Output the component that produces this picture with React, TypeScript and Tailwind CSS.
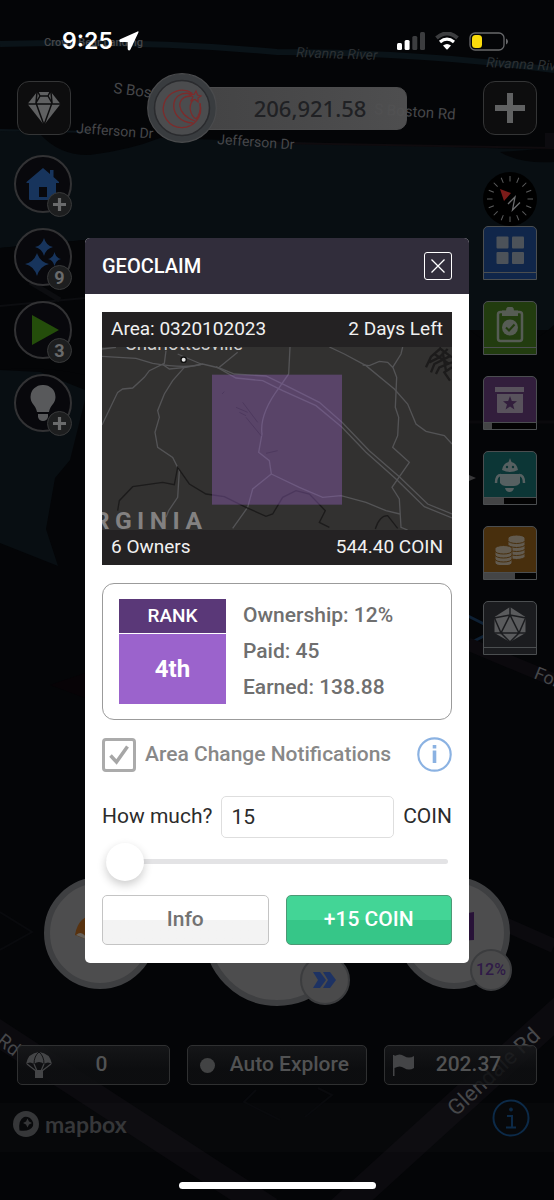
import React, { useState } from "react";

const HUD_FONT = "font-['Roboto','Open_Sans',sans-serif]";

function BackgroundMap() {
  return (
    <svg
      className="absolute inset-0 h-full w-full"
      viewBox="0 0 554 1200"
      preserveAspectRatio="xMidYMid slice"
      aria-hidden="true"
    >
      <rect width="554" height="1200" fill="#040507" />
      <path d="M0 129 L40 134 Q60 156 90 155 Q130 150 160 138 L554 150 V410 Q540 330 554 330 V330 L470 330 V400 H85 L70 460 L55 478 L46 529 L58 566 L0 543 V370 L40 372 L85 390 V240 L0 248 Z" fill="#080e12" />
      <path d="M500 152 Q520 164 554 162 V148 Z" fill="#040507" />
      <path d="M0 248 L85 240 V375 Q40 365 0 370 Z" fill="#040507" />
      <path d="M470 330 Q510 365 554 325 V470 H470 Z" fill="#040507" />
      <path d="M0 44 Q150 40 277 52 Q420 52 554 70" fill="none" stroke="#0a1318" strokeWidth="6" />
      <path d="M0 306 L85 298" stroke="#0c0d10" strokeWidth="2" />
      <path d="M30 282 L60 300" stroke="#0c0d10" strokeWidth="5" />
      <path d="M277 143 L554 148" stroke="#0f0b0e" strokeWidth="2" />
      <path d="M0 130 L90 132" stroke="#0b1318" strokeWidth="2" />
      <rect x="545" y="133" width="9" height="15" fill="#0c0b0f" />
      <path d="M469 422 H554" stroke="#0a090c" strokeWidth="3" />
      <path d="M50 685 L85 673 V698 Z" fill="#070306" />
      <path d="M468 616 L490 627 M468 644 L490 633" stroke="#0e2033" strokeWidth="3" />
      <path d="M468 644 L554 680" stroke="#0b090d" strokeWidth="13" />
      <path d="M469 475 L476 478 L469 481 Z" fill="#38383a" />
      <path d="M-10 1028 L270 1210" stroke="#0b0a0e" strokeWidth="26" />
      <path d="M572 1000 L330 1220" stroke="#0b0a0e" strokeWidth="28" />
      <path d="M500 922 L554 946" stroke="#0b0a0e" strokeWidth="14" />
      <rect y="1103" width="554" height="49" fill="#ffffff" fillOpacity="0.015" />
      <path d="M0 912 L32 932 L0 950 M256 1090 L244 1102 L280 1120 M318 1088 L332 1095 L305 1117" fill="none" stroke="#090a0d" strokeWidth="2" />
      <g fill="#46474a" className="font-['Roboto',sans-serif]">
        <text x="44" y="46" fontSize="11" className="font-medium">Crown Bear Landing</text>
        <text x="296" y="57" fontSize="14" fontStyle="italic" fill="#2b3033" transform="rotate(2 296 57)">Rivanna River</text>
        <text x="486" y="67" fontSize="14" fontStyle="italic" fill="#2b3033" transform="rotate(3 486 67)">Rivanna River</text>
        <text x="113" y="93" fontSize="15" transform="rotate(7 113 93)">S Boston Rd</text>
        <text x="76" y="133" fontSize="14" transform="rotate(4 76 133)">Jefferson Dr</text>
        <text x="217" y="144" fontSize="14" transform="rotate(4 217 144)">Jefferson Dr</text>
        <text x="374" y="114" fontSize="15" transform="rotate(4 374 114)">S Boston Rd</text>
        <text x="533" y="678" fontSize="18" transform="rotate(22 533 678)">Forest</text>
        <text x="-4" y="1043" fontSize="19" transform="rotate(38 -4 1043)">Rd</text>
        <text x="456" y="1117" fontSize="22" transform="rotate(-43 456 1117)">Glendale Rd</text>
      </g>
    </svg>
  );
}

function StatusBar() {
  return (
    <div className="relative flex h-[73px] items-center justify-between pt-[9px] pr-[46px] pl-[62px] text-white">
      <div className="flex items-center gap-1.5">
        <span className="font-['Inter',sans-serif] text-[23px] leading-7 font-semibold">9:25</span>
        <svg width="20" height="20" viewBox="0 0 20 20" aria-hidden="true">
          <path d="M18.6 0.4 L1.2 8.3 C-0.2 9 0.1 10.9 1.6 10.9 L8.6 11 L8.7 18 C8.7 19.6 10.7 19.9 11.4 18.5 L19.4 1.4 C19.8 0.6 19.4 0.1 18.6 0.4 Z" fill="currentColor" />
        </svg>
      </div>
      <div className="flex items-center gap-2.5">
        <svg width="28" height="18" viewBox="0 0 28 18" aria-hidden="true">
          <rect x="0" y="11" width="5" height="7" rx="1.5" fill="#fff" />
          <rect x="7.6" y="8" width="5" height="10" rx="1.5" fill="#fff" />
          <rect x="15.3" y="4" width="5" height="14" rx="1.5" fill="#3c3d3f" />
          <rect x="23" y="0" width="5" height="18" rx="1.5" fill="#3c3d3f" />
        </svg>
        <svg width="24" height="18" viewBox="0 0 24 18" aria-hidden="true">
          <path d="M1.5 6 Q12 -3 22.5 6" fill="none" stroke="#3c3d3f" strokeWidth="4" />
          <path d="M5 10 Q12 4.2 19 10" fill="none" stroke="#fff" strokeWidth="3.2" />
          <path d="M8 13.6 Q12 10.4 16 13.6 L12.6 17.2 Q12 17.8 11.4 17.2 Z" fill="#fff" />
        </svg>
        <svg width="39" height="19" viewBox="0 0 39 19" aria-hidden="true">
          <rect x="1" y="1" width="34" height="17" rx="5" fill="none" stroke="#68696b" strokeWidth="1.3" />
          <rect x="3" y="3" width="10" height="13" rx="3.5" fill="#fbdc0b" />
          <path d="M37 6.5 Q39 7.5 39 9.5 Q39 11.5 37 12.5 Z" fill="#68696b" />
        </svg>
      </div>
    </div>
  );
}

const squareButton =
  "flex size-[54px] items-center justify-center rounded-[12px] border border-[#343536] bg-[#0d0d0e]";

function TopBar() {
  return (
    <div className="relative flex items-center justify-between px-[17px]">
      <button type="button" aria-label="Gems" className={squareButton}>
        <svg width="34" height="34" viewBox="0 0 34 34" aria-hidden="true">
          <path d="M10 1 H24 L33.5 13 L17 34 L0.5 13 Z" fill="#5f6061" />
          <path d="M0 13 H34 M10 1 L9 12 L17 34 L25 12 L24 1 M9 12 L13 5 H21 L25 12 M13 5 L11 1 M21 5 L23 1" fill="none" stroke="#0d0d0e" strokeWidth="1.5" />
        </svg>
      </button>
      <div className="flex items-center">
        <svg className="relative z-10" width="70" height="70" viewBox="0 0 70 70" aria-hidden="true">
          <circle cx="35" cy="35" r="34.3" fill="#393c3f" stroke="#4a4b4d" strokeWidth="1.2" />
          <circle cx="35" cy="35" r="27.5" fill="#4b4c4e" stroke="#2a2b2e" strokeWidth="1.5" />
          <path d="M45.500 20.500 A18.700 18.700 0 1 0 53 31" fill="none" stroke="#7d2b2b" strokeWidth="1.3" />
          <path d="M45 21 C21 15 20 49 46 50" fill="none" stroke="#7d2b2b" strokeWidth="1.3" />
          <path d="M44 23 C28 23 29 42 48 48" fill="none" stroke="#7d2b2b" strokeWidth="1.3" />
          <path d="M46 27 C41 33 43 42 49 46 M53 30 C54 38 52 43 49 46" fill="none" stroke="#7d2b2b" strokeWidth="1.3" />
          <path d="M49 18 L50.5 22 L54 23 L51 25 L51 29 L48 26.5 L44 27.5 L46 24 L43 21.5 L47 21.5 Z" fill="#4b4c4e" stroke="#7d2b2b" strokeWidth="1.2" />
        </svg>
        <div className="-ml-6 flex h-[43px] w-[214px] items-center justify-center rounded-[10px] border border-[#4c4c4d] bg-gradient-to-r from-[#434344] to-[#525253]/95 pl-5">
          <span className="font-['Noto_Sans',sans-serif] text-[22px] font-medium text-[#202124]">206,921.58</span>
        </div>
      </div>
      <button type="button" aria-label="Add" className={squareButton}>
        <svg width="30" height="30" viewBox="0 0 30 30" aria-hidden="true">
          <path d="M15 0 V30 M0 15 H30" stroke="#606162" strokeWidth="6" />
        </svg>
      </button>
    </div>
  );
}

function RoundTool({ label, badge, children }: { label: string; badge: string; children: React.ReactNode }) {
  return (
    <button
      type="button"
      aria-label={label}
      className="relative flex size-[58px] items-center justify-center rounded-full border-2 border-[#323234] bg-[#08080c]"
    >
      {children}
      <span className="absolute -right-0.5 -bottom-1.5 flex size-[25px] items-center justify-center rounded-full border border-[#38393a] bg-[#1d1e1f] font-['Roboto',sans-serif] text-[18px] leading-none font-bold text-[#6a6b6c]">
        {badge === "+" ? (
          <svg width="13" height="13" viewBox="0 0 13 13" aria-hidden="true">
            <path d="M6.5 0 V13 M0 6.5 H13" stroke="#6a6b6c" strokeWidth="3.2" />
          </svg>
        ) : (
          badge
        )}
      </span>
    </button>
  );
}

function LeftTools() {
  return (
    <div className="mt-3 flex flex-col gap-[15px]">
      <RoundTool label="Home" badge="+">
        <svg width="34" height="34" viewBox="0 0 34 34" aria-hidden="true">
          <path d="M17 1 L24 7 V3 H27.5 V10 L33 15 V16 H30 V32 Q30 33 29 33 H4 Q3 33 3 32 V16 H0.5 V15 Z M13 20 V30 H21 V20 Z" fill="#17345c" fillRule="evenodd" />
        </svg>
      </RoundTool>
      <RoundTool label="Boosts" badge="9">
        <svg width="38" height="38" viewBox="0 0 38 38" aria-hidden="true">
          <path d="M13 15 Q16 24 25 26 Q16 28 13 38 Q10 28 1 26 Q10 24 13 15 Z" fill="#17345c" />
          <path d="M20 0 Q22 7.500 29 9 Q22 10.500 20 18 Q18 10.500 11 9 Q18 7.500 20 0 Z" fill="#17345c" />
          <path d="M30.5 14 Q32 20 37 21 Q32 22 30.5 28 Q29 22 24 21 Q29 20 30.5 14 Z" fill="#17345c" />
        </svg>
      </RoundTool>
      <RoundTool label="Play" badge="3">
        <svg width="28" height="32" viewBox="0 0 28 32" className="ml-1" aria-hidden="true">
          <path d="M1 1 L28 16 L1 31 Z" fill="#244d0b" />
        </svg>
      </RoundTool>
      <RoundTool label="Tips" badge="+">
        <svg width="26" height="38" viewBox="0 0 26 38" aria-hidden="true">
          <path d="M13 1 A12 12 0 0 1 25.5 13 C25.5 20 20 21 19 28 H7 C6 21 0.5 20 0.5 13 A12 12 0 0 1 13 1 Z M8 30 H18 V33 Q17 37 13 37 Q9 37 8 33 Z" fill="#58595b" />
        </svg>
      </RoundTool>
    </div>
  );
}

function Compass() {
  const ticks = Array.from({ length: 16 }, (_, i) => i * 22.5);
  return (
    <svg width="54" height="54" viewBox="0 0 54 54" role="img" aria-label="Compass">
      <circle cx="27" cy="27" r="27" fill="#000" />
      {ticks.map((angle) => (
        <path key={angle} d="M27 4 V9.5" stroke="#5b5c5d" strokeWidth="1" transform={`rotate(${angle} 27 27)`} />
      ))}
      <path d="M17 17 L28 21 L21 29 Z" fill="#7c1b19" />
      <path d="M25 32 L32 25 L29.500 38 L37 30.500" fill="none" stroke="#6d6e70" strokeWidth="1.3" />
    </svg>
  );
}

function Tile({ label, colour, fill, children }: { label: string; colour: string; fill: string; children: React.ReactNode }) {
  return (
    <button
      type="button"
      aria-label={label}
      className={`flex h-[54px] w-[54px] flex-col rounded-t-[5px] border border-[#4b4e50] ${colour}`}
    >
      <span className="flex w-full flex-1 items-center justify-center">{children}</span>
      <span className="block h-[7px] w-full border-t border-[#4b4e50]">
        {fill !== "" && (
          <span className="block h-full w-full bg-[#030303]">
            <span className={`block h-full bg-[#444546] ${fill}`} />
          </span>
        )}
      </span>
    </button>
  );
}

function RightTools() {
  return (
    <div className="mt-[29px] flex flex-col items-center">
      <Compass />
      <div className="flex flex-col gap-[21px]">
        <Tile label="Apps" colour="bg-[#10264a]" fill="">
          <svg width="28" height="28" viewBox="0 0 28 28" fill="#4c5259" aria-hidden="true">
            <rect x="0.5" y="0.5" width="12" height="12" rx="1" />
            <rect x="16" y="0.5" width="12" height="12" rx="1" />
            <rect x="0.5" y="16" width="12" height="12" rx="1" />
            <rect x="16" y="16" width="12" height="12" rx="1" />
          </svg>
        </Tile>
        <Tile label="Missions" colour="bg-[#223c0f]" fill="">
          <svg width="28" height="36" viewBox="0 0 28 36" aria-hidden="true">
            <rect x="2" y="5" width="24" height="29" rx="2.5" fill="none" stroke="#565c54" strokeWidth="2.5" />
            <path d="M6 3.5 H10 A4 4 0 0 1 18 3.5 H22 V9 H6 Z" fill="#565c54" />
            <circle cx="14" cy="20.5" r="8" fill="#565c54" />
            <path d="M10 20.5 L13 23.5 L18.5 17.5" fill="none" stroke="#223c0f" strokeWidth="2" />
          </svg>
        </Tile>
        <Tile label="Collection" colour="bg-[#321e3c]" fill="w-[15%]">
          <svg width="30" height="28" viewBox="0 0 30 28" aria-hidden="true">
            <path d="M0 1 H29 V6 H0 Z M2 8 H28 V26 Q28 27 27 27 H3 Q2 27 2 26 Z" fill="#58525c" />
            <path d="M15 10 L16.8 15 L22 15.2 L18 18.5 L19.4 23.5 L15 20.6 L10.6 23.5 L12 18.5 L8 15.2 L13.2 15 Z" fill="#321e3c" />
          </svg>
        </Tile>
        <Tile label="Robot" colour="bg-[#0c3636]" fill="w-[38%]">
          <svg width="32" height="34" viewBox="0 0 32 34" aria-hidden="true">
            <path d="M16 0 L17.5 4 Q23 5.5 24 12 Q20 14 16 14 Q12 14 8 12 Q9 5.5 14.5 4 Z" fill="#566061" />
            <circle cx="13" cy="9" r="1.2" fill="#0c3636" />
            <circle cx="19" cy="9" r="1.2" fill="#0c3636" />
            <path d="M6 16 H26 V25 Q24 28 20 28 H12 Q8 28 6 25 Z M11 30 H20 Q19 34 15.5 34 Q12 34 11 30 Z" fill="#566061" />
            <path d="M7 17 Q2 17 2 25 M25 17 Q30 17 30 25" fill="none" stroke="#566061" strokeWidth="2.5" />
          </svg>
        </Tile>
        <Tile label="Coins" colour="bg-[#482f0d]" fill="w-[60%]">
          <svg width="30" height="30" viewBox="0 0 30 30" fill="#625b50" stroke="#482f0d" strokeWidth="1" aria-hidden="true">
            {[19, 15, 11, 7, 3].map((y) => (
              <path key={y} d={`M13 ${y} a8.5 3 0 0 1 17 0 v2.5 a8.5 3 0 0 1 -17 0 Z`} />
            ))}
            {[26, 22, 18, 14].map((y) => (
              <path key={y} d={`M0 ${y - 0.5} a8.5 3 0 0 1 17 0 v2.5 a8.5 3 0 0 1 -17 0 Z`} />
            ))}
          </svg>
        </Tile>
        <Tile label="Dice" colour="bg-[#1b1c1f]" fill="">
          <svg width="32" height="36" viewBox="0 0 32 36" aria-hidden="true">
            <path d="M16 0 L31.5 10 V26 L16 35 L0.5 26 V10 Z" fill="#5a5b5d" />
            <path d="M0 10 L7 26 L16 8 L25 26 L32 10 M0 11 L16 8 L32 11 M16 0 V8 M7 26 H25 M0 26 L7 26 L16 35 L25 26 H32" fill="none" stroke="#1b1c1f" strokeWidth="1.5" />
          </svg>
        </Tile>
      </div>
    </div>
  );
}

function ActionCircles() {
  return (
    <div className="relative flex items-center justify-between px-[44px]">
      <button type="button" aria-label="Airdrop" className="flex size-[112px] items-center rounded-full border-[6px] border-[#3e3f41] bg-[#4d4d4e] pb-3 pl-6">
        <svg width="50" height="28" viewBox="0 0 50 28" aria-hidden="true">
          <path d="M1 22 Q4 2 25 0 Q46 2 49 22 L14 27 Z" fill="#58320f" />
          <path d="M2 22 Q8 16 14 27 Z" fill="#66615b" />
        </svg>
      </button>
      <div className="relative">
        <button type="button" aria-label="Explore" className="block size-[146px] rounded-full border-[6px] border-[#3e3f41] bg-[#4d4d4e]" />
        <span className="absolute right-0 bottom-px flex size-[50px] items-center justify-center rounded-full border-2 border-[#3b3c3e] bg-[#4a4a4b]">
          <svg width="24" height="16" viewBox="0 0 24 16" fill="#1d3263" aria-hidden="true">
            <path d="M0 0 H7 L13 8 L7 16 H0 L5 8 Z M10 0 H17 L23 8 L17 16 H10 L15 8 Z" />
          </svg>
        </span>
      </div>
      <div className="relative">
        <button type="button" aria-label="Geoclaim" className="flex size-[112px] items-center justify-end rounded-full border-[6px] border-[#3e3f41] bg-[#4d4d4e] pr-[30px] pb-3">
          <svg width="36" height="30" viewBox="0 0 36 30" aria-hidden="true">
            <path d="M0 6 L36 0 V28 L0 30 Z" fill="#281238" />
          </svg>
        </button>
        <span className="absolute -right-0.5 -bottom-0.5 flex size-[42px] items-center justify-center rounded-full border-2 border-[#3b3c3e] bg-[#4a4a4b] font-['Roboto',sans-serif] text-[16px] font-medium text-[#2f1a47]">
          12%
        </span>
      </div>
    </div>
  );
}

const pill =
  "flex h-10 items-center rounded-[5px] border border-[#2f3031] bg-gradient-to-b from-[#18191b]/85 to-[#0e0f11]/85 to-60% text-[21px] font-medium text-[#515253]";

function BottomBar() {
  return (
    <div className={`relative mt-[39px] flex gap-[17px] px-[17px] ${HUD_FONT}`}>
      <button type="button" className={`${pill} flex-1 px-2`}>
        <svg width="26" height="27" viewBox="0 0 26 27" aria-hidden="true">
          <path d="M0 12 Q2 1 13 0 Q24 1 26 12 Q22 9 18 12 Q13 8 8 12 Q4 9 0 12 Z M9 18 H17 V26 H9 Z" fill="#444547" />
          <path d="M1 12 L10 19 M8 12 L11 19 M18 12 L15 19 M25 12 L16 19" stroke="#444547" strokeWidth="1.3" />
          <path d="M8 12 Q8 4 13 0 Q18 4 18 12" fill="none" stroke="#121315" strokeWidth="1" />
        </svg>
        <span className="flex-1 pr-2.5">0</span>
      </button>
      <button type="button" className={`${pill} w-[180px] justify-between pr-[17px] pl-3`}>
        <span className="size-[15px] rounded-full bg-[#424344]" />
        <span>Auto Explore</span>
      </button>
      <button type="button" className={`${pill} flex-1 px-2`}>
        <svg width="22" height="22" viewBox="0 0 22 22" aria-hidden="true">
          <path d="M0 1 H1.5 V22 H0 Z M1.5 2 Q7 -1 11 2 Q16 5 21 2 V14 Q16 17 11 14 Q7 11 1.5 14 Z" fill="#444547" />
        </svg>
        <span className="flex-1 pr-1.5">202.37</span>
      </button>
    </div>
  );
}

function Footer() {
  return (
    <div className="relative mt-3.5 flex h-[83px] items-start justify-between pr-6 pl-[13px]">
      <a href="#mapbox" className="mt-3 flex items-center gap-1.5 text-[#363739]">
        <svg width="26" height="26" viewBox="0 0 26 26" aria-hidden="true">
          <circle cx="13" cy="13" r="13" fill="currentColor" />
          <path d="M6.5 19.5 Q5 9 11 6 A7.5 7.5 0 0 1 20 15 Q17 21 6.5 19.5 Z" fill="#08090b" />
          <path d="M14.5 7.5 L16 10.5 L19 12 L16 13.5 L14.5 16.5 L13 13.5 L10 12 L13 10.5 Z" fill="currentColor" />
        </svg>
        <span className="font-['Lato',sans-serif] text-[23px] leading-[26px] font-bold">mapbox</span>
      </a>
      <button type="button" aria-label="Map attribution" className="text-[#0c2a48]">
        <svg width="38" height="38" viewBox="0 0 38 38" fill="none" stroke="currentColor" aria-hidden="true">
          <circle cx="19" cy="19" r="17.5" strokeWidth="2" />
          <path d="M15 17 H20 V28 M14 28.5 H24" strokeWidth="2" />
          <circle cx="19" cy="10.5" r="1.5" fill="currentColor" />
        </svg>
      </button>
    </div>
  );
}

function AreaMap() {
  return (
    <svg className="block w-full" viewBox="48 349 1050 549" aria-hidden="true">
      <rect x="48" y="349" width="1050" height="549" fill="#323130" />
      <g fill="none" stroke="#545456" strokeWidth="4">
        <path d="M48 377 L150 383 L200 398 Q300 415 350 400 L400 412 L445 430 L540 436 L600 465 L700 515 L768 575 L850 660 L940 738 L1025 820 L1098 850" />
        <path d="M390 408 L450 442 L530 450 L590 480 L690 525 L768 590 L840 665 L930 745 L1015 828 L1098 862" />
        <path d="M48 583 L95 485 L110 475 L140 472 L175 440 L190 420 L235 398 L240 360 M48 355 L90 350 M228 400 L250 415 L300 410 L350 400 M275 370 L345 400 M400 410 L455 365" />
        <path d="M295 410 L260 450 L235 490 L215 540 L220 560 L207 605 L215 650 L260 680 L280 720 L275 800 L248 840 L240 860" />
        <path d="M612 349 L608 430 L580 470 Q520 550 528 610 L518 665 L550 690 L556 730 L500 775 L485 830 L440 893" />
        <path d="M556 730 L640 770 L710 800 L765 795 L840 815 L900 840 L942 850" />
        <path d="M730 349 L775 370 L840 405 L925 475 L965 520 L990 580 L1020 602 L1075 615 L1098 640" />
        <path d="M830 403 L850 405 L880 392 L905 395 L920 410 L945 370 L950 349 M920 408 L932 440 L928 530 L938 560 L935 615 L920 650 L970 695 L918 770 L940 805 L945 890 L965 898" />
      </g>
      <g fill="none" stroke="#1c1b1b" strokeWidth="4">
        <path d="M95 840 L100 810 L140 768 L230 755 L265 762 L275 710 L310 760 L360 790 L415 798 L480 830 L540 857 L560 850 L590 800 L630 780 L670 790 L718 840 L700 875 L730 890" />
        <path d="M868 895 Q880 855 905 855 L935 893" />
        <path d="M1065 352 L1035 378 L1020 410 M1085 355 L1060 380 L1030 395 M1095 375 L1045 400 L1035 425 M1098 395 L1060 410 L1050 430 M1060 352 L1098 380 M1098 410 L1075 425 L1092 450 M1045 370 L1090 400 M1070 365 L1080 420" strokeWidth="7" />
        <path d="M450 530 L485 545 M460 545 L480 555 M470 515 L515 575 M480 560 L525 615 M540 668 L575 660 M408 490 L415 483" strokeWidth="2.5" />
      </g>
      <g className="font-['Roboto',sans-serif]">
        <text x="116" y="358" fontSize="56" fill="#cfcfcf">Charlottesville</text>
        <text x="23" y="894" fontSize="74" fill="#838181" className="font-bold tracking-[0.22em]">RGINIA</text>
      </g>
      <circle cx="293" cy="387" r="8" fill="#e5e5e5" stroke="#111" strokeWidth="4" />
      <rect x="378" y="432" width="390" height="390" fill="#9361be" fillOpacity="0.4" />
    </svg>
  );
}

function AreaPanel() {
  return (
    <section className="bg-[#242223] text-[19px] text-[#f1f1f1]">
      <div className="flex h-[35px] items-center justify-between px-[9px]">
        <span>Area: 0320102023</span>
        <span>2 Days Left</span>
      </div>
      <AreaMap />
      <div className="flex h-[35px] items-center justify-between px-[9px]">
        <span>6 Owners</span>
        <span>544.40 COIN</span>
      </div>
    </section>
  );
}

function GeoclaimDialog() {
  const [amount, setAmount] = useState(15);
  const [notify, setNotify] = useState(true);
  return (
    <div
      role="dialog"
      aria-labelledby="geoclaim-title"
      className={`w-full overflow-hidden rounded-[5px] bg-white ${HUD_FONT}`}
    >
      <header className="flex h-14 items-center justify-between bg-[#312d3b] px-[17px] text-white">
        <h1 id="geoclaim-title" className="text-[20px] font-medium">GEOCLAIM</h1>
        <button type="button" aria-label="Close" className="flex size-7 items-center justify-center rounded-[3px] border border-white">
          <svg width="14" height="14" viewBox="0 0 14 14" aria-hidden="true">
            <path d="M0.5 0.5 L13.5 13.5 M13.5 0.5 L0.5 13.5" stroke="currentColor" strokeWidth="1.3" />
          </svg>
        </button>
      </header>

      <div className="px-[17px] py-[18px]">
        <AreaPanel />

        <section className="mt-[18px] flex items-center gap-[17px] rounded-[12px] border border-[#9b9b9b] px-4 py-[15px]">
          <div className="flex w-[107px] flex-col gap-px text-center text-white">
            <div className="bg-[#5a3878] text-[19px] leading-[34px] font-medium">RANK</div>
            <div className="bg-[#9b63cc] text-[24px] leading-[70px] font-bold">4th</div>
          </div>
          <div className="-my-1 text-[21px] leading-[36px] font-medium text-[#6f6f6f]">
            <p>Ownership: 12%</p>
            <p>Paid: 45</p>
            <p>Earned: 138.88</p>
          </div>
        </section>

        <div className="mt-[18px] flex h-[34px] items-center justify-between">
          <label className="flex items-center gap-[9px] text-[21px] font-medium text-[#888888]">
            <span className="relative flex size-[34px]">
              <input
                type="checkbox"
                checked={notify}
                onChange={(e) => setNotify(e.target.checked)}
                className="peer size-[34px] appearance-none rounded-[4px] border-[3px] border-[#ababab] bg-white"
              />
              <svg className="pointer-events-none absolute inset-0 hidden peer-checked:block" viewBox="0 0 34 34" aria-hidden="true">
                <path d="M8.5 17.5 L14.5 24 L25.5 8.5" fill="none" stroke="#a6a6a6" strokeWidth="3.5" />
              </svg>
            </span>
            Area Change Notifications
          </label>
          <button type="button" aria-label="About notifications" className="text-[#8bb2e2]">
            <svg className="block" width="35" height="35" viewBox="0 0 35 35" aria-hidden="true">
              <circle cx="17.5" cy="17.5" r="16.2" fill="none" stroke="currentColor" strokeWidth="2.2" />
              <path d="M17.5 13.5 V26" stroke="currentColor" strokeWidth="3.6" />
              <path d="M17.5 8 V11.5" stroke="currentColor" strokeWidth="3.6" />
            </svg>
          </button>
        </div>

        <div className="mt-6 flex items-center gap-[9px] text-[21px] text-[#2b2b2b]">
          <label htmlFor="amount">How much?</label>
          <input
            id="amount"
            type="text"
            inputMode="numeric"
            value={amount}
            onChange={(e) => setAmount(Number(e.target.value) || 0)}
            className="h-[42px] min-w-0 flex-1 rounded-[5px] border border-[#dedede] bg-white px-[9px]"
          />
          <span>COIN</span>
        </div>

        <div className="flex h-[48px] items-center px-1">
          <input
            type="range"
            aria-label="Coin amount"
            min={15}
            max={1000}
            value={amount}
            onChange={(e) => setAmount(Number(e.target.value))}
            className="h-[5px] w-full appearance-none rounded-full bg-[#e3e3e5] [&::-webkit-slider-thumb]:size-[38px] [&::-webkit-slider-thumb]:appearance-none [&::-webkit-slider-thumb]:rounded-full [&::-webkit-slider-thumb]:bg-white [&::-webkit-slider-thumb]:shadow-[0_4px_10px_rgba(0,0,0,0.2)]"
          />
        </div>

        <div className="mt-[9px] grid grid-cols-2 gap-[17px] text-[21px] font-medium">
          <button type="button" className="h-[50px] rounded-[5px] border border-[#c4c4c4] bg-gradient-to-b from-white from-50% to-[#f3f3f3] to-50% text-[#727272]">
            Info
          </button>
          <button type="button" className="h-[50px] rounded-[5px] border border-[#4c9975] bg-gradient-to-b from-[#43d596] from-50% to-[#36c688] to-50% text-white">
            +{amount} COIN
          </button>
        </div>
      </div>
    </div>
  );
}

export default function App() {
  return (
    <main className="relative flex min-h-screen flex-col overflow-hidden bg-[#040507]">
      <BackgroundMap />
      <StatusBar />
      <TopBar />
      <div className="relative flex justify-between pr-[17px] pl-[14px]">
        <LeftTools />
        <RightTools />
      </div>
      <div className="min-h-5 flex-1" />
      <ActionCircles />
      <BottomBar />
      <Footer />
      <div className="relative mx-auto mb-[11px] h-[7px] w-[197px] rounded-full bg-white" />
      <div className="absolute inset-0 flex items-center justify-center px-[85px]">
        <GeoclaimDialog />
      </div>
    </main>
  );
}
